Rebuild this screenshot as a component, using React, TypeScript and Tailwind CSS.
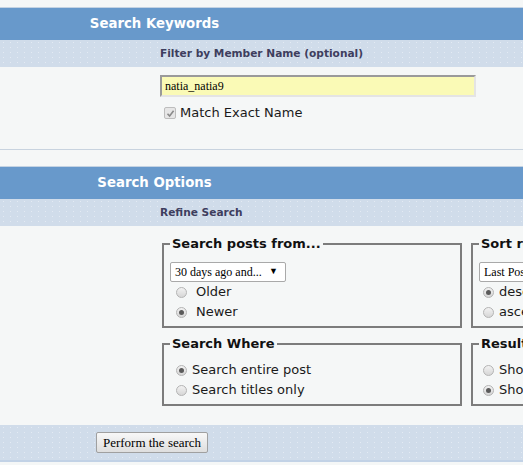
import React from 'react';

const Radio: React.FC<{ checked?: boolean }> = ({ checked }) => (
  <span className="inline-flex h-[11px] w-[11px] shrink-0 items-center justify-center rounded-full border border-[#b4b4b4] bg-[linear-gradient(#f2f2f2,#d6d6d6)]">
    {checked && <span className="h-[5px] w-[5px] rounded-full bg-[#5a5a5a]" />}
  </span>
);

const RadioRow: React.FC<{ checked?: boolean; label: string; gap: string; indent: string }> = ({
  checked,
  label,
  gap,
  indent,
}) => (
  <label className={`flex h-[20px] items-center ${indent} ${gap} text-[13px] leading-[20px] text-[#1a1a1a] whitespace-nowrap`}>
    <Radio checked={checked} />
    <span>{label}</span>
  </label>
);

const FakeSelect: React.FC<{ value: string; width: string }> = ({ value, width }) => (
  <div
    className={`flex h-[20px] ${width} items-center justify-between rounded-[2px] border border-[#a9a9a9] bg-white pl-[4px] pr-[7px] text-[12px] text-black whitespace-nowrap overflow-hidden`}
    style={{ fontFamily: '"Liberation Serif", serif' }}
  >
    <span>{value}</span>
    <span className="text-[9px]">▼</span>
  </div>
);

const Box: React.FC<{ legend: string; pt: string; children: React.ReactNode }> = ({ legend, pt, children }) => (
  <fieldset className={`w-[300px] border-2 border-[#7c7c7c] px-[6px] ${pt} pb-[4px]`}>
    <legend className="px-[2px] text-[13px] font-bold leading-[16px] text-[#111] whitespace-nowrap">{legend}</legend>
    {children}
  </fieldset>
);

const dots =
  'bg-[#d0dcea] bg-[radial-gradient(#e3eaf3_0.8px,transparent_0.8px)] bg-[length:7px_5px]';

export default function App() {
  return (
    <div
      className="h-[465px] w-[523px] overflow-hidden bg-[#f5f7f7]"
      style={{ fontFamily: '"DejaVu Sans", Verdana, sans-serif' }}
    >
      <div className="h-[7px]" />

      {/* Search Keywords */}
      <div className="border-t border-[#c4d3e3]">
        <div className="flex h-[32px] items-center bg-[#6899cb]">
          <div className="w-[309px] text-center text-[13.3px] font-bold text-white">Search Keywords</div>
        </div>
        <div className={`flex h-[27px] items-center pl-[160px] ${dots}`}>
          <span className="text-[10.6px] font-bold text-[#3e3e5e]">Filter by Member Name (optional)</span>
        </div>
        <div className="h-[83px] border-b border-[#c8d3df] pl-[160px] pt-[8px]">
          <div
            className="flex h-[22px] w-[316px] items-center border-2 border-t-[#9a9a9a] border-l-[#9a9a9a] border-r-[#e4e4e4] border-b-[#e4e4e4] bg-[#fafab6] pl-[3px] text-[12px] text-black"
            style={{ fontFamily: '"Liberation Serif", serif' }}
          >
            natia_natia9
          </div>
          <label className="mt-[5px] flex h-[22px] items-center gap-[4px] pl-[4px] text-[13px] text-[#1a1a1a]">
            <span className="flex h-[12px] w-[12px] items-center justify-center rounded-[2px] border border-[#bdbdbd] bg-[#e6e6e6]">
              <svg width="9" height="9" viewBox="0 0 9 9">
                <path d="M1.5 4.8 L3.6 7 L7.6 1.8" fill="none" stroke="#8a8a8a" strokeWidth="1.6" />
              </svg>
            </span>
            <span>Match Exact Name</span>
          </label>
        </div>
      </div>

      <div className="h-[16px]" />

      {/* Search Options */}
      <div className="border-t border-[#c4d3e3]">
        <div className="flex h-[32px] items-center bg-[#6899cb]">
          <div className="w-[309px] text-center text-[13.3px] font-bold text-white">Search Options</div>
        </div>
        <div className={`flex h-[27px] items-center pl-[160px] ${dots}`}>
          <span className="text-[10.6px] font-bold text-[#3e3e5e]">Refine Search</span>
        </div>
        <div className="grid grid-cols-[300px_300px] gap-x-[9px] gap-y-[8px] pl-[162px] pt-[10px] pb-[19px]">
          <Box legend="Search posts from..." pt="pt-[10px]">
            <FakeSelect value="30 days ago and..." width="w-[116px]" />
            <RadioRow label="Older" indent="pl-[6px]" gap="gap-[9px]" />
            <RadioRow label="Newer" checked indent="pl-[6px]" gap="gap-[9px]" />
          </Box>
          <Box legend="Sort results by" pt="pt-[10px]">
            <FakeSelect value="Last Posting Date" width="w-[140px]" />
            <RadioRow label="descending order" checked indent="pl-[4px]" gap="gap-[5px]" />
            <RadioRow label="ascending order" indent="pl-[4px]" gap="gap-[5px]" />
          </Box>
          <Box legend="Search Where" pt="pt-[8px]">
            <RadioRow label="Search entire post" checked indent="pl-[6px]" gap="gap-[5px]" />
            <RadioRow label="Search titles only" indent="pl-[6px]" gap="gap-[5px]" />
          </Box>
          <Box legend="Results" pt="pt-[8px]">
            <RadioRow label="Show threads" indent="pl-[4px]" gap="gap-[5px]" />
            <RadioRow label="Show posts" checked indent="pl-[4px]" gap="gap-[5px]" />
          </Box>
        </div>
        <div className={`flex h-[37px] items-center border-b-2 border-[#c2d2e6] pl-[96px] ${dots}`}>
          <button
            className="h-[21px] w-[112px] rounded-[2px] border border-[#a0a0a0] bg-[linear-gradient(#f8f8f8,#dedede)] text-[13px] leading-[19px] text-black"
            style={{ fontFamily: '"Liberation Serif", serif' }}
          >
            Perform the search
          </button>
        </div>
      </div>
    </div>
  );
}
